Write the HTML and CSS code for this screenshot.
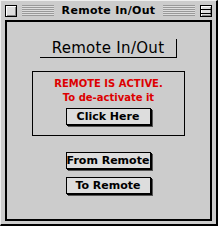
FILE: index.html
```html
<!DOCTYPE html>
<html lang="en">

<head>
  <meta charset="UTF-8">
  <title>Remote In/Out</title>
  <link rel="stylesheet" href="styles.css">
</head>

<body>

  <div class="window">
    <div class="titlebar">
      <span class="close-box"></span>
      <span class="stripes"></span>
      <span class="title">Remote In/Out</span>
      <span class="stripes"></span>
      <span class="zoom-box"></span>
    </div>

    <div class="frame">
      <div class="heading">Remote In/Out</div>

      <div class="status">
        <p class="alert">REMOTE IS ACTIVE.<br>To de-activate it</p>
        <button class="btn">Click Here</button>
      </div>

      <button class="btn from">From Remote</button>
      <button class="btn to">To Remote</button>
    </div>
  </div>

</body>

</html>
```

FILE: styles.css
```css
body {
  margin: 0;
  background: #ccc;
  font-family: "DejaVu Sans", sans-serif;
}

.window {
  width: 218px;
  height: 226px;
  box-sizing: border-box;
  display: flex;
  flex-direction: column;
  background: #ccc;
  border-top: 1px solid #eee;
  border-left: 1px solid #eee;
  border-right: 2px solid #000;
  border-bottom: 2px solid #000;
}

.titlebar {
  height: 19px;
  display: flex;
  align-items: center;
  gap: 5px;
  padding: 0 4px;
}

.close-box,
.zoom-box {
  width: 12px;
  height: 12px;
  box-sizing: border-box;
  border: 1px solid #000;
  background: #ddd;
  box-shadow: inset 1px 1px 0 #fff, inset -1px -1px 0 #888;
}

.zoom-box {
  position: relative;
}

.zoom-box::after {
  content: '';
  position: absolute;
  left: 0;
  right: 0;
  top: 3px;
  height: 3px;
  border-top: 1px solid #000;
  border-bottom: 1px solid #000;
}

.stripes {
  flex: 1;
  height: 11px;
  background: repeating-linear-gradient(to bottom, #999 0 1px, #ddd 1px 2px);
}

.title {
  font-weight: bold;
  font-size: 11px;
  letter-spacing: 0.3px;
  padding: 0 3px;
}

.frame {
  flex: 1;
  margin: 0 4px 3px;
  border: 2px solid #000;
  display: flex;
  flex-direction: column;
  align-items: center;
  padding-top: 17px;
}

.heading {
  width: 137px;
  height: 19px;
  box-sizing: border-box;
  border-right: 1px solid #000;
  border-bottom: 1px solid #000;
  font-size: 15px;
  letter-spacing: 0.3px;
  line-height: 18px;
  text-align: center;
}

.status {
  margin-top: 13px;
  width: 153px;
  height: 65px;
  box-sizing: border-box;
  border: 1px solid #000;
  display: flex;
  flex-direction: column;
  align-items: center;
  padding-top: 5px;
}

.alert {
  margin: 0;
  color: #d00;
  font-weight: bold;
  font-size: 10px;
  line-height: 14px;
  text-align: center;
}

.btn {
  width: 85px;
  height: 17px;
  box-sizing: border-box;
  margin: 0 1px 1px 0;
  padding: 0;
  border: 1px solid #000;
  box-shadow: 1px 1px 0 #000, 2px 2px 0 #555;
  background: #ddd;
  font-family: "DejaVu Sans", sans-serif;
  font-weight: bold;
  font-size: 11px;
  color: #000;
}

.status .btn {
  margin-top: 3px;
}

.from {
  margin-top: 16px;
}

.to {
  margin-top: 7px;
}
```
